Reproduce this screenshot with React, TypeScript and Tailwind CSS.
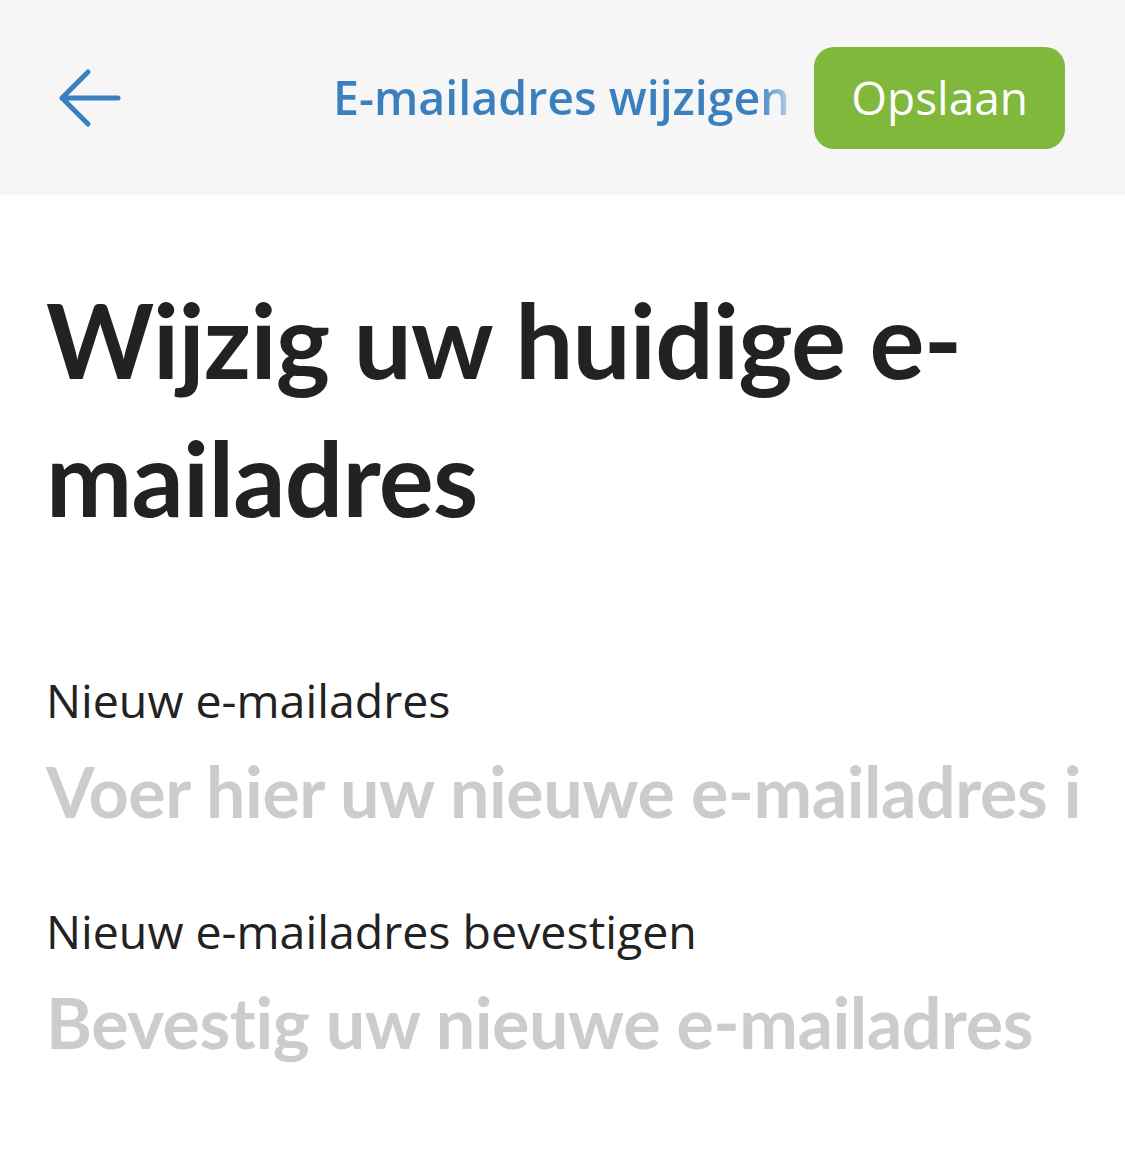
import React from "react";

function BackArrow() {
  return (
    <svg width="64" height="60" viewBox="0 0 64 60" fill="none" className="text-[#3b80be]">
      <path d="M4 30 H60 M30 4 L4 30 L30 56" stroke="currentColor" strokeWidth="5" strokeLinecap="round" strokeLinejoin="round" />
    </svg>
  );
}

function Field({ label, placeholder }: { label: string; placeholder: string }) {
  return (
    <div className="flex flex-col">
      <label className="font-['Open_Sans',sans-serif] text-[46.5px] leading-[62px] text-[#222]">{label}</label>
      <input
        placeholder={placeholder}
        className="mt-[18px] w-full bg-transparent outline-none font-['Lato',sans-serif] font-bold text-[70px] leading-[84px] tracking-[-0.45px] text-[#222] placeholder:text-[#cccccc] [font-variant-ligatures:none]"
      />
    </div>
  );
}

export default function App() {
  return (
    <main className="min-h-screen w-[1125px] bg-white">
      <header className="grid h-[195px] grid-cols-[1fr_auto_1fr] items-center bg-[#f6f6f6] pl-[58px] pr-[60px]">
        <button className="justify-self-start">
          <BackArrow />
        </button>
        <h1 className="bg-linear-to-r from-[#3b80be] from-[93%] to-[#b9d3eb] bg-clip-text font-['Open_Sans',sans-serif] text-[46.5px] font-semibold text-transparent">
          E-mailadres wijzigen
        </h1>
        <button className="justify-self-end rounded-[20px] bg-[#80b83c] px-[37px] h-[102px] font-['Open_Sans',sans-serif] text-[46px] text-white">
          Opslaan
        </button>
      </header>

      <section className="px-[46px] pt-[75px]">
        <h2 className="font-['Lato',sans-serif] text-[103px] font-bold leading-[138px] tracking-[-0.75px] text-[#222] [font-variant-ligatures:none]">
          Wijzig uw huidige e-mailadres
        </h2>

        <div className="mt-[123px] flex flex-col gap-[67px]">
          <Field label="Nieuw e-mailadres" placeholder="Voer hier uw nieuwe e-mailadres in" />
          <Field label="Nieuw e-mailadres bevestigen" placeholder="Bevestig uw nieuwe e-mailadres" />
        </div>
      </section>
    </main>
  );
}
